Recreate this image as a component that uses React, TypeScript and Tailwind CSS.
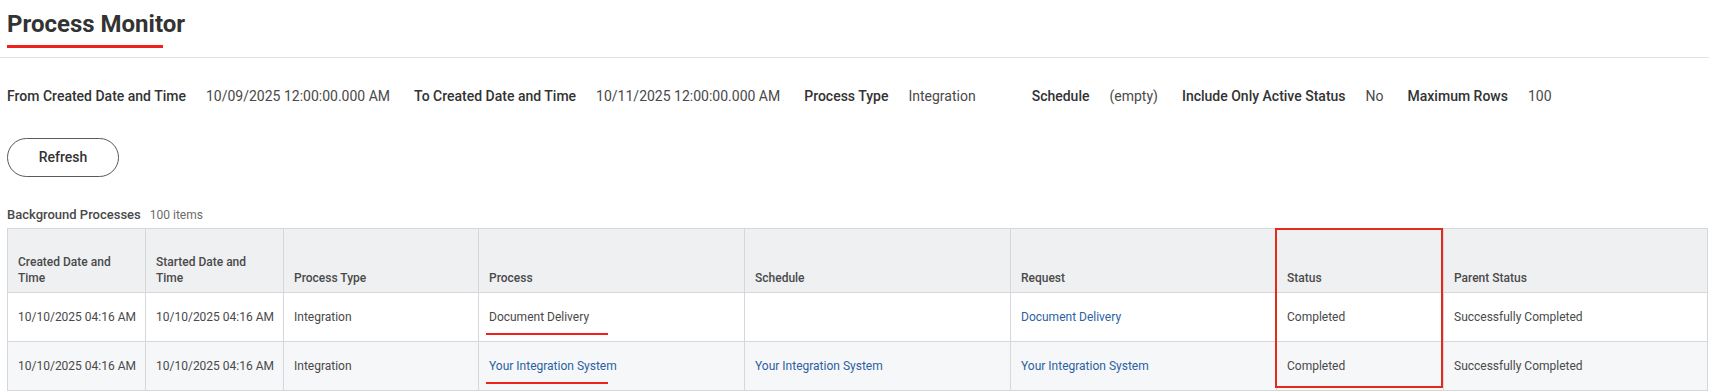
import React from "react";

type Cell = { text: string; link?: boolean; mark?: boolean };

const columns = [
  { label: "Created Date and Time", width: "w-[138px]" },
  { label: "Started Date and Time", width: "w-[138px]" },
  { label: "Process Type", width: "w-[195px]" },
  { label: "Process", width: "w-[266px]" },
  { label: "Schedule", width: "w-[266px]" },
  { label: "Request", width: "w-[266px]" },
  { label: "Status", width: "w-[167px]" },
  { label: "Parent Status", width: "w-[264px]" },
];

const rows: Cell[][] = [
  [
    { text: "10/10/2025 04:16 AM" },
    { text: "10/10/2025 04:16 AM" },
    { text: "Integration" },
    { text: "Document Delivery", mark: true },
    { text: "" },
    { text: "Document Delivery", link: true },
    { text: "Completed" },
    { text: "Successfully Completed" },
  ],
  [
    { text: "10/10/2025 04:16 AM" },
    { text: "10/10/2025 04:16 AM" },
    { text: "Integration" },
    { text: "Your Integration System", link: true, mark: true },
    { text: "Your Integration System", link: true },
    { text: "Your Integration System", link: true },
    { text: "Completed" },
    { text: "Successfully Completed" },
  ],
];

const filters = [
  { label: "From Created Date and Time", value: "10/09/2025 12:00:00.000 AM" },
  { label: "To Created Date and Time", value: "10/11/2025 12:00:00.000 AM" },
  { label: "Process Type", value: "Integration", extra: "mr-[56px]" },
  { label: "Schedule", value: "(empty)" },
  { label: "Include Only Active Status", value: "No" },
  { label: "Maximum Rows", value: "100" },
];

function FilterBar() {
  return (
    <div className="mt-[28px] flex items-center px-[7px] text-[14px] leading-[20px]">
      {filters.map((f) => (
        <div key={f.label} className={"flex items-center " + (f.extra ?? "mr-[24px]")}>
          <span className="mr-[20px] font-medium text-[#333]">{f.label}</span>
          <span className="text-[#494949]">{f.value}</span>
        </div>
      ))}
    </div>
  );
}

function ProcessTable() {
  return (
    <div className="relative ml-[7px] w-[1701px]">
      <table className="w-full table-fixed border-collapse text-[12px] leading-[16px]">
        <thead>
          <tr className="h-[64px] bg-[#eff0f2]">
            {columns.map((c) => (
              <th
                key={c.label}
                className={
                  c.width +
                  " border border-[#d5d7da] px-[10px] pb-[6px] text-left align-bottom font-medium text-[#4a4a4a]"
                }
              >
                {c.label}
              </th>
            ))}
          </tr>
        </thead>
        <tbody>
          {rows.map((r, i) => (
            <tr key={i} className={"h-[49px] " + (i % 2 === 1 ? "bg-[#f6f7f8]" : "bg-white")}>
              {r.map((cell, j) => (
                <td key={j} className="border border-[#d5d7da] px-[10px] align-middle whitespace-nowrap">
                  <span
                    className={
                      "relative " + (cell.link ? "text-[#2c5fa3]" : "text-[#494949]")
                    }
                  >
                    {cell.text}
                    {cell.mark && (
                      <span className="absolute left-[-3px] top-[23px] h-[2px] w-[122px] bg-[#f0201a]" />
                    )}
                  </span>
                </td>
              ))}
            </tr>
          ))}
        </tbody>
      </table>
      <div className="pointer-events-none absolute left-[1268px] top-0 h-[160px] w-[168px] border-2 border-[#e32b1b]" />
    </div>
  );
}

export default function App() {
  return (
    <div className="min-h-screen bg-white font-['Roboto',sans-serif] text-[#333]">
      <div className="box-border h-[58px] border-b border-[#e2e2e2] px-[7px]">
        <div className="inline-block pt-[10px]">
          <h1 className="text-[24px] font-bold leading-[28px] text-[#333]">Process Monitor</h1>
          <div className="mt-[7px] h-[3px] w-[156px] bg-[#f0201a]" />
        </div>
      </div>

      <FilterBar />

      <div className="mt-[32px] px-[7px]">
        <button className="h-[39px] w-[112px] rounded-full border border-[#5a5a5a] bg-white text-[14px] font-medium text-[#333]">
          Refresh
        </button>
      </div>

      <div className="mt-[30px] flex items-baseline px-[7px] leading-[16px]">
        <span className="text-[13px] font-medium text-[#494949]">Background Processes</span>
        <span className="ml-[9px] text-[12px] text-[#6b6b6b]">100 items</span>
      </div>

      <div className="mt-[5px]">
        <ProcessTable />
      </div>
    </div>
  );
}
